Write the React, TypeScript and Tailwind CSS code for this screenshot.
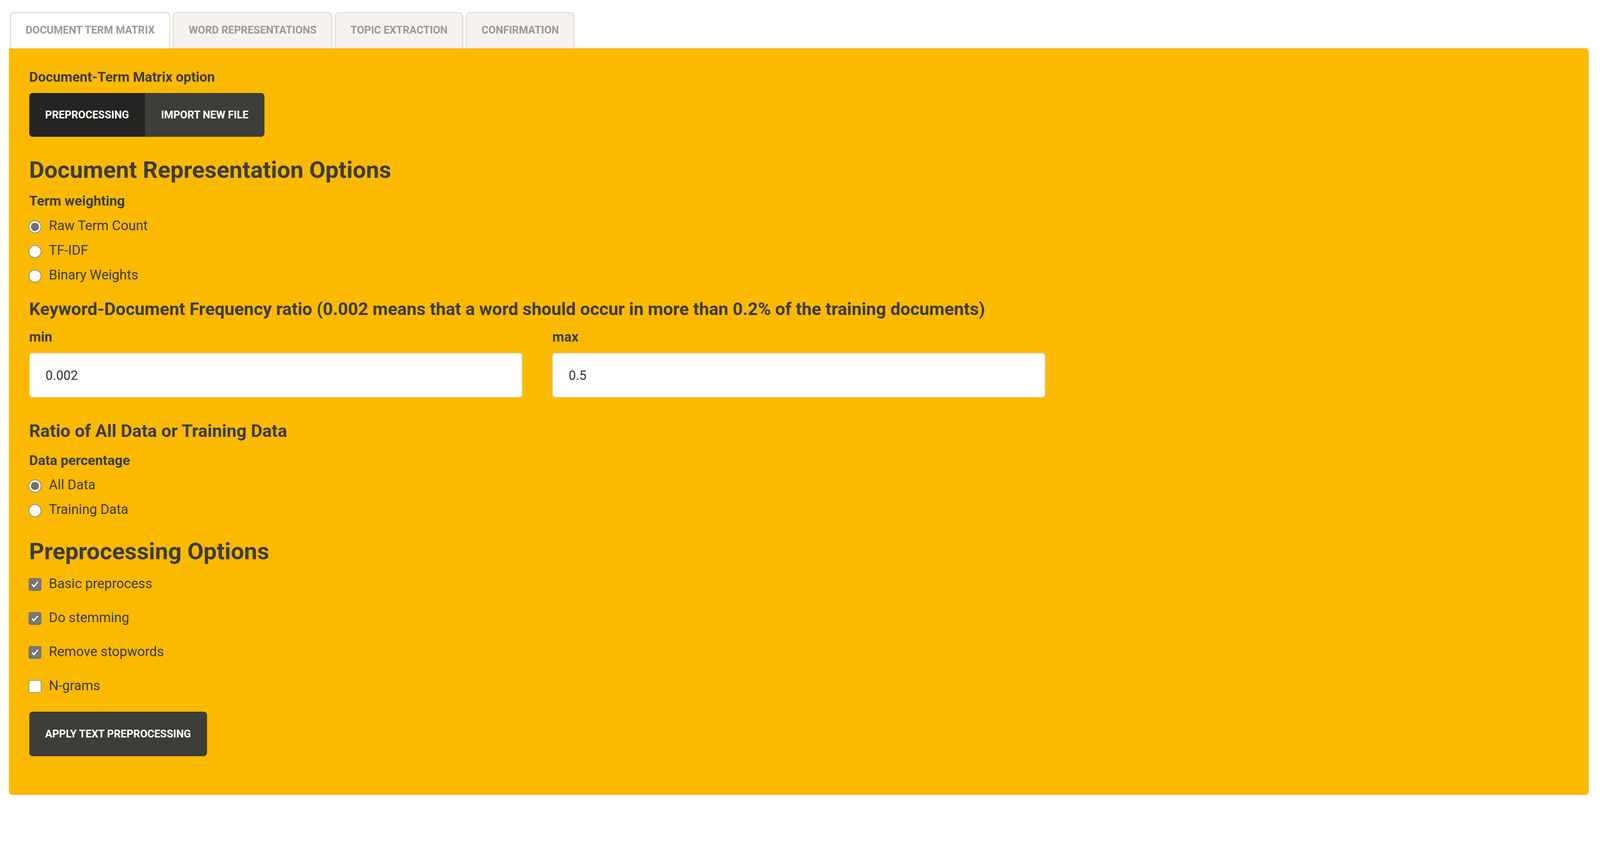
import React from 'react';

const tabs = ['DOCUMENT TERM MATRIX', 'WORD REPRESENTATIONS', 'TOPIC EXTRACTION', 'CONFIRMATION'];

function Radio({ label, checked }: { label: string; checked?: boolean }) {
  return (
    <div className="-ml-[2px] flex h-[63px] items-center gap-[19.5px]">
      <span className="mt-[5px] flex h-[33px] w-[33px] items-center justify-center rounded-full border-[2px] border-[#8c8c8c] bg-white">
        {checked && <span className="h-[21px] w-[21px] rounded-full bg-[#6f6f6f]" />}
      </span>
      <span className="text-[34.5px] leading-[63px]">{label}</span>
    </div>
  );
}

function Check({ label, checked }: { label: string; checked?: boolean }) {
  return (
    <div className="-ml-[2px] flex h-[87px] items-center gap-[19.5px]">
      {checked ? (
        <span className="mt-[4px] flex h-[33px] w-[33px] items-center justify-center rounded-[5px] bg-[#777777]">
          <svg viewBox="0 0 24 24" className="h-[23px] w-[23px]" fill="none" stroke="white" strokeWidth="3.5" strokeLinecap="round" strokeLinejoin="round">
            <path d="M5 13l4 5L19 6" />
          </svg>
        </span>
      ) : (
        <span className="mt-[4px] h-[33px] w-[33px] rounded-[5px] border-[2px] border-[#9a9a9a] bg-white" />
      )}
      <span className="text-[34.5px] leading-[87px]">{label}</span>
    </div>
  );
}

export default function App() {
  return (
    <div className="bg-white pb-[45px] pl-[23px] pr-[29px] pt-[31px] font-[Roboto,sans-serif] text-[#3d3d3d]">
      {/* tab strip */}
      <div className="flex h-[93px] items-stretch border-b-[2px] border-[#e3ded5]">
        {tabs.map((t, i) => (
          <div
            key={t}
            className={
              i === 0
                ? 'mb-[-2px] ml-[2px] mr-[6px] flex items-center rounded-t-[11px] border-[3px] border-b-0 border-[#e3ded5] bg-white px-[37.5px] pb-[4px] text-[27px] font-bold text-[#9a9a9a]'
                : 'mr-[6px] flex items-center rounded-t-[11px] border-[3px] border-b-0 border-[#e3ded5] bg-[#f6f3ee] px-[37.5px] pb-[2px] text-[27px] font-bold text-[#9a9a9a]'
            }
          >
            {t}
          </div>
        ))}
      </div>

      {/* panel */}
      <div className="rounded-[8px] rounded-tl-none bg-[#fbb900] px-[51.5px] pb-[99px] pt-[49px]">
        <div className="text-[35px] font-bold leading-[50px]">Document-Term Matrix option</div>
        <div className="mt-[15px] flex h-[112px] w-fit overflow-hidden rounded-[8.5px] text-[27px] font-bold text-white">
          <div className="flex items-center bg-[#242422] px-[41px]">PREPROCESSING</div>
          <div className="flex items-center bg-[#3d3d39] px-[41px]">IMPORT NEW FILE</div>
        </div>

        <h3 className="mt-[51px] text-[60px] font-bold leading-[68px]">Document Representation Options</h3>
        <div className="mt-[21px] text-[35px] font-bold leading-[50px]">Term weighting</div>
        <div className="mt-[6px]">
          <Radio label="Raw Term Count" checked />
          <Radio label="TF-IDF" />
          <Radio label="Binary Weights" />
        </div>

        <h4 className="mt-[30px] text-[45px] font-bold leading-[52px]">
          Keyword-Document Frequency ratio (0.002 means that a word should occur in more than 0.2% of the training documents)
        </h4>
        <div className="mt-[21px] grid grid-cols-3 gap-x-[77px]">
          <div>
            <div className="text-[35px] font-bold leading-[50px]">min</div>
            <input
              defaultValue="0.002"
              className="mt-[15px] h-[114px] w-full rounded-[7.5px] border-[2px] border-[#e6e1d8] bg-white px-[40px] text-[33px] text-[#333333] outline-none"
            />
          </div>
          <div>
            <div className="text-[35px] font-bold leading-[50px]">max</div>
            <input
              defaultValue="0.5"
              className="mt-[15px] h-[114px] w-full rounded-[7.5px] border-[2px] border-[#e6e1d8] bg-white px-[40px] text-[33px] text-[#333333] outline-none"
            />
          </div>
        </div>

        <h4 className="mt-[60px] text-[45px] font-bold leading-[52px]">Ratio of All Data or Training Data</h4>
        <div className="mt-[25px] text-[35px] font-bold leading-[50px]">Data percentage</div>
        <div className="mt-[5px]">
          <Radio label="All Data" checked />
          <Radio label="Training Data" />
        </div>

        <h3 className="mt-[42px] text-[60px] font-bold leading-[68px]">Preprocessing Options</h3>
        <div className="mt-[5px]">
          <Check label="Basic preprocess" checked />
          <Check label="Do stemming" checked />
          <Check label="Remove stopwords" checked />
          <Check label="N-grams" />
        </div>

        <button className="mt-[23px] h-[114px] rounded-[8.5px] bg-[#3d3d39] px-[41px] text-[27px] font-bold text-white">
          APPLY TEXT PREPROCESSING
        </button>
      </div>
    </div>
  );
}
